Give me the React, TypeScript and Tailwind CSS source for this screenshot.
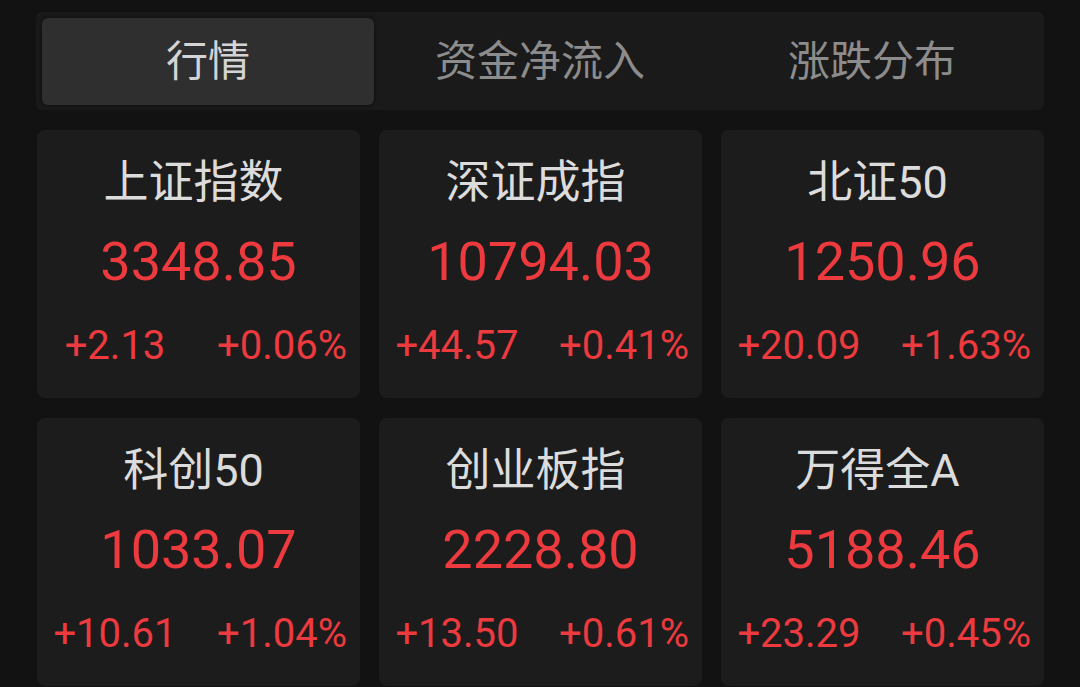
const tabs = ["行情", "资金净流入", "涨跌分布"];

const indices = [
  { name: "上证指数", price: "3348.85", change: "+2.13", pct: "+0.06%" },
  { name: "深证成指", price: "10794.03", change: "+44.57", pct: "+0.41%" },
  { name: "北证50", price: "1250.96", change: "+20.09", pct: "+1.63%" },
  { name: "科创50", price: "1033.07", change: "+10.61", pct: "+1.04%" },
  { name: "创业板指", price: "2228.80", change: "+13.50", pct: "+0.61%" },
  { name: "万得全A", price: "5188.46", change: "+23.29", pct: "+0.45%" },
];

function IndexCard({ name, price, change, pct }: (typeof indices)[number]) {
  return (
    <div className="h-[268px] rounded-lg bg-[#1c1c1c] flex flex-col">
      <div className="pt-[28px] h-[80px] pr-[10px] text-center text-[45px] leading-[50px] text-[#dcdcdc]">
        {name}
      </div>
      <div className="pt-[14px] h-[90px] text-center text-[54px] leading-[76px] text-[#ec3a3f]">{price}</div>
      <div className="flex items-start pt-[22px] text-[40px] leading-[48px] text-[#ec3a3f]">
        <div className="w-[156px] text-center">{change}</div>
        <div className="flex-1 pl-[11px] text-center">{pct}</div>
      </div>
    </div>
  );
}

export default function App() {
  return (
    <div
      className="w-[1080px] h-[687px] overflow-hidden bg-[#121212] pl-[37px] pr-[36px] pt-[12px]"
      style={{ fontFamily: 'Roboto, "Noto Sans CJK SC", sans-serif' }}
    >
      <div className="flex rounded-md bg-[#1a1a1a] p-[6px] pb-[5px] -ml-px">
        {tabs.map((t, i) => (
          <div
            key={t}
            className={`w-[332px] h-[87px] flex items-center justify-center rounded-md text-[42px] ${
              i === 0 ? "bg-[#2f2f2f] text-[#d4d4d4] shadow-[0_0_4px_rgba(0,0,0,0.6)]" : "text-[#8c8c8c]"
            }`}
          >
            {t}
          </div>
        ))}
      </div>
      <div className="grid grid-cols-3 gap-x-[19px] gap-y-[20px] mt-[20px]">
        {indices.map((d) => (
          <IndexCard key={d.name} {...d} />
        ))}
      </div>
    </div>
  );
}
